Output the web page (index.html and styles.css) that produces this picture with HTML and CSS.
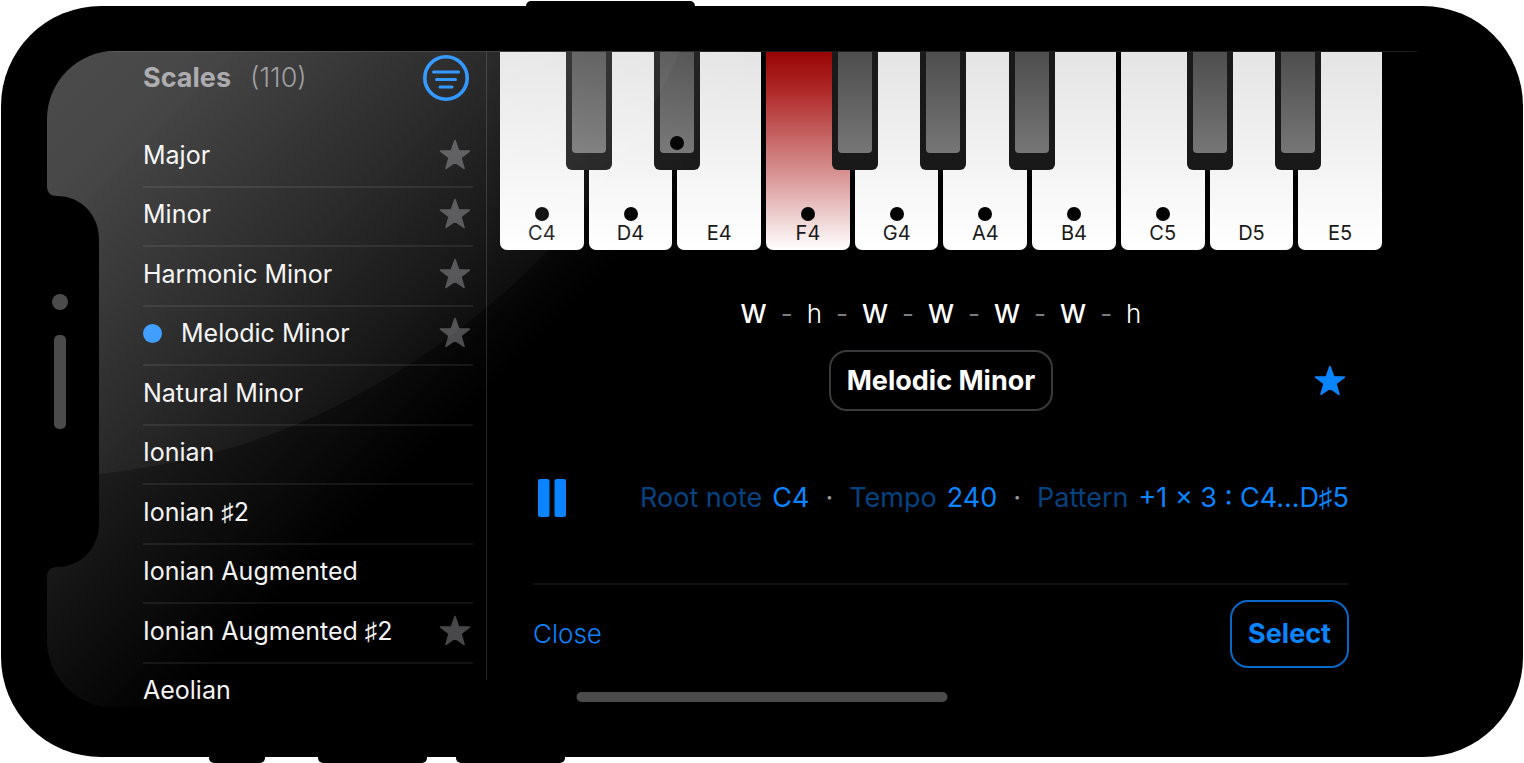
FILE: index.html
```html
<!DOCTYPE html>
<html lang="en">
<head>
<meta charset="utf-8">
<meta name="viewport" content="width=device-width, initial-scale=1">
<title>Scales</title>
<link rel="stylesheet" href="styles.css">
</head>
<body>
<svg class="sprite" aria-hidden="true">
  <symbol id="star" viewBox="0 0 32 32"><path d="M16 1.600 19.600 11.800 30.400 12.100 21.900 18.600 25 29.400 16 23.200 7 29.400 10.100 18.600 1.600 12.100 12.400 11.800Z" fill="currentColor" stroke="currentColor" stroke-width="1.600" stroke-linejoin="round"/></symbol>
</svg>
<div class="phone">
  <span class="side-button side-power"></span>
  <span class="side-button side-mute"></span>
  <span class="side-button side-up"></span>
  <span class="side-button side-down"></span>
  <div class="screen">
    <aside class="sidebar">
      <header class="sidebar-head">
        <h1 class="heading">Scales</h1>
        <span class="count">(110)</span>
        <button class="icon-button filter" aria-label="Filter">
          <svg width="46" height="46" viewBox="0 0 46 46" fill="none" stroke="currentColor" stroke-linecap="round"><circle cx="23" cy="23" r="21.200" stroke-width="3.600"/><path d="M10.500 17h25M13.500 24.500h19M17 32h12" stroke-width="3"/></svg>
        </button>
      </header>
      <ul class="scales">
        <li><button class="scale">Major<svg class="star"><use href="#star"/></svg></button></li>
        <li><button class="scale">Minor<svg class="star"><use href="#star"/></svg></button></li>
        <li><button class="scale">Harmonic Minor<svg class="star"><use href="#star"/></svg></button></li>
        <li><button class="scale" aria-current="true"><span class="bullet"></span>Melodic Minor<svg class="star"><use href="#star"/></svg></button></li>
        <li><button class="scale">Natural Minor</button></li>
        <li><button class="scale">Ionian</button></li>
        <li><button class="scale">Ionian ♯2</button></li>
        <li><button class="scale">Ionian Augmented</button></li>
        <li><button class="scale">Ionian Augmented ♯2<svg class="star"><use href="#star"/></svg></button></li>
        <li><button class="scale">Aeolian</button></li>
      </ul>
    </aside>
    <span class="divider"></span>
    <main class="detail">
      <div class="piano">
        <div class="key"><span class="dot"></span>C4<span class="black"><span class="black-top"></span></span></div>
        <div class="key"><span class="dot"></span>D4<span class="black"><span class="black-top"><span class="dot"></span></span></span></div>
        <div class="key">E4</div>
        <div class="key playing"><span class="dot"></span>F4<span class="black"><span class="black-top"></span></span></div>
        <div class="key"><span class="dot"></span>G4<span class="black"><span class="black-top"></span></span></div>
        <div class="key"><span class="dot"></span>A4<span class="black"><span class="black-top"></span></span></div>
        <div class="key"><span class="dot"></span>B4</div>
        <div class="key"><span class="dot"></span>C5<span class="black"><span class="black-top"></span></span></div>
        <div class="key">D5<span class="black"><span class="black-top"></span></span></div>
        <div class="key">E5</div>
      </div>
      <p class="intervals"><b>W</b><i>-</i><span>h</span><i>-</i><b>W</b><i>-</i><b>W</b><i>-</i><b>W</b><i>-</i><b>W</b><i>-</i><span>h</span></p>
      <div class="title-row">
        <button class="outlined name">Melodic Minor</button>
        <button class="icon-button favourite" aria-label="Favourite"><svg class="star"><use href="#star"/></svg></button>
      </div>
      <div class="player">
        <button class="icon-button pause" aria-label="Pause"><svg width="28" height="38" viewBox="0 0 28 38" fill="currentColor"><rect width="11.500" height="38" rx="2"/><rect x="16.500" width="11.500" height="38" rx="2"/></svg></button>
        <div class="settings">
          <button class="setting"><span class="label">Root note</span>C4</button>
          <span class="sep">·</span>
          <button class="setting"><span class="label">Tempo</span>240</button>
          <span class="sep">·</span>
          <button class="setting"><span class="label">Pattern</span>+1 × 3 : C4...D♯5</button>
        </div>
      </div>
      <footer class="actions">
        <button class="close">Close</button>
        <button class="outlined select">Select</button>
      </footer>
    </main>
    <svg class="glare" width="700" height="656" viewBox="47 52 700 656" aria-hidden="true">
      <defs>
        <linearGradient id="near" gradientUnits="userSpaceOnUse" x1="100" y1="60" x2="480" y2="440">
          <stop offset="0" stop-color="#fff" stop-opacity=".29"/><stop offset=".12" stop-color="#fff" stop-opacity=".28"/><stop offset=".5" stop-color="#fff" stop-opacity=".17"/><stop offset=".72" stop-color="#fff" stop-opacity=".1"/><stop offset="1" stop-color="#fff" stop-opacity="0"/>
        </linearGradient>
        <linearGradient id="far" gradientUnits="userSpaceOnUse" x1="310" y1="270" x2="460" y2="420">
          <stop offset="0" stop-color="#fff" stop-opacity=".11"/><stop offset="1" stop-color="#fff" stop-opacity="0"/>
        </linearGradient>
      </defs>
      <path fill="url(#near)" d="M47 52H680C657 105 605 195 540 260C500 300 445 345 387 379C300 430 215 467 47 480Z"/>
      <path fill="url(#far)" d="M680 52C657 105 605 195 540 260C500 300 445 345 387 379C300 430 215 467 47 480V708H747V52Z"/>
    </svg>
    <svg class="notch" width="53" height="395" viewBox="0 0 53 395" aria-hidden="true">
      <path d="M0 2C0 9 4 12 10 12C34 12 52 31 52 55V340C52 364 34 383 10 383C4 383 0 386 0 393Z"/>
      <circle cx="13" cy="118" r="8" fill="#4b4b4b"/><rect x="7" y="151" width="12" height="94" rx="5" fill="#4b4b4b"/>
    </svg>
    <span class="home"></span>
  </div>
</div>
</body>
</html>
```
FILE: styles.css
```css
* { box-sizing: border-box; }
body {
  margin: 0;
  padding: 6px 1px;
  min-height: 100vh;
  display: flex;
  background: #fff;
  color: #fff;
  font: 400 26px/32px Inter, "Liberation Sans", "DejaVu Sans", sans-serif;
}
button {
  margin: 0;
  padding: 0;
  border: 0;
  background: none;
  color: inherit;
  font: inherit;
  cursor: pointer;
}
.sprite { position: absolute; width: 0; height: 0; }
.phone {
  position: relative;
  flex: 1;
  display: flex;
  padding: 45px 46px 49px;
  border-radius: 100px;
  background: #000;
}
.side-button { position: absolute; height: 6px; background: #000; }
.side-power { top: -5px; left: 525px; width: 169px; border-radius: 5px 5px 0 0; }
.side-mute, .side-up, .side-down { bottom: -6px; border-radius: 0 0 5px 5px; }
.side-mute { left: 208px; width: 56px; }
.side-up { left: 317px; width: 109px; }
.side-down { left: 455px; width: 109px; }

.screen {
  position: relative;
  flex: 1;
  display: flex;
  padding: 1px 95px 0 96px;
  border-radius: 68px;
  background: linear-gradient(#1c1c1c, #1c1c1c) top / 100% 1px no-repeat;
  overflow: hidden;
}
.sidebar { flex: 0 0 343px; display: flex; flex-direction: column; padding-right: 13px; }
.sidebar-head { display: flex; align-items: center; height: 52px; margin-bottom: 24px; color: #98989d; font-size: 27px; }
.heading { margin: 0 19px 0 0; font-size: 27px; font-weight: 700; color: #8e8e93; }
.count { font-weight: 300; color: #808085; }
.icon-button { display: flex; align-items: center; justify-content: center; color: #0a84ff; }
.filter { margin: 0 4px 0 auto; color: #0a84ff; }
.scales {
  flex: 1;
  display: flex;
  flex-direction: column;
  margin: 0 0 -15px;
  padding: 0;
  list-style: none;
  font-size: 25px;
}
.scales li { flex: 1; display: flex; border-bottom: 2px solid #121213; }
.scale { flex: 1; display: flex; align-items: center; padding: 0 2px 4px 0; color: #f4f4f4; text-align: left; }
.star { width: 32px; height: 32px; color: #48484a; }
.scale .star { margin-left: auto; }
.bullet { width: 19px; height: 19px; margin-right: 19px; border-radius: 50%; background: #1488ff; }
.divider { width: 1px; margin-bottom: 28px; background: #232324; }

.detail { flex: 1; padding-left: 13px; }
.piano { display: grid; grid-template-columns: repeat(10, 1fr); gap: 5px; height: 198px; }
.key {
  position: relative;
  display: flex;
  flex-direction: column;
  align-items: center;
  justify-content: flex-end;
  padding-bottom: 5px;
  border-radius: 0 0 7px 7px;
  background: linear-gradient(#e4e4e4, #fff);
  color: #1a1a1a;
  font-size: 20px;
  line-height: 24px;
}
.playing { background: linear-gradient(#980404, #b02a2a 20%, #d89494 62%, #fff); }
.dot { width: 14px; height: 14px; border-radius: 50%; background: #000; }
.black {
  position: absolute;
  z-index: 1;
  top: 0;
  right: -28px;
  display: flex;
  width: 46px;
  height: 118px;
  padding: 0 6px 17px;
  border-radius: 0 0 6px 6px;
  background: #191919;
}
.black-top {
  flex: 1;
  display: flex;
  align-items: flex-end;
  justify-content: center;
  padding-bottom: 3px;
  border-radius: 0 0 4px 4px;
  background: linear-gradient(#4e4e4e, #767676);
}
.intervals { display: flex; justify-content: center; gap: 14px; margin: 48px 0 20px; }
.intervals b { font-weight: 500; }
.intervals span { font-weight: 300; }
.intervals i { font-style: normal; color: #7c7c80; }
.title-row { display: grid; grid-template-columns: 1fr auto 1fr; align-items: center; padding: 0 33px; }
.outlined { border: 2px solid #3a3a3c; border-radius: 18px; font-size: 27px; font-weight: 700; }
.name { grid-column: 2; height: 61px; padding: 0 16px; }
.favourite { justify-self: end; margin-right: 3px; }
.favourite .star { color: #0a84ff; }
.player { display: flex; align-items: center; justify-content: space-between; height: 40px; margin: 67px 33px 65px 38px; font-size: 27px; }
.settings { display: flex; align-items: center; gap: 16px; }
.setting { display: flex; gap: 10px; color: #0a84ff; }
.label { color: #054280; }
.sep { color: #98989d; }
.actions {
  display: flex;
  align-items: center;
  justify-content: space-between;
  margin: 0 33px;
  padding-top: 15px;
  border-top: 2px solid #111112;
}
.close { color: #0a84ff; font-weight: 300; }
.select { height: 68px; padding: 0 16px; border-color: #0868c8; color: #0a84ff; }

.glare { position: absolute; z-index: 2; top: 0; left: 0; pointer-events: none; }
.notch { position: absolute; z-index: 3; top: 133px; left: 0; }
.home {
  position: absolute;
  z-index: 3;
  bottom: 6px;
  left: 50%;
  width: 371px;
  height: 10px;
  border-radius: 5px;
  background: #4b4b4b;
  transform: translateX(-50%);
}
```
